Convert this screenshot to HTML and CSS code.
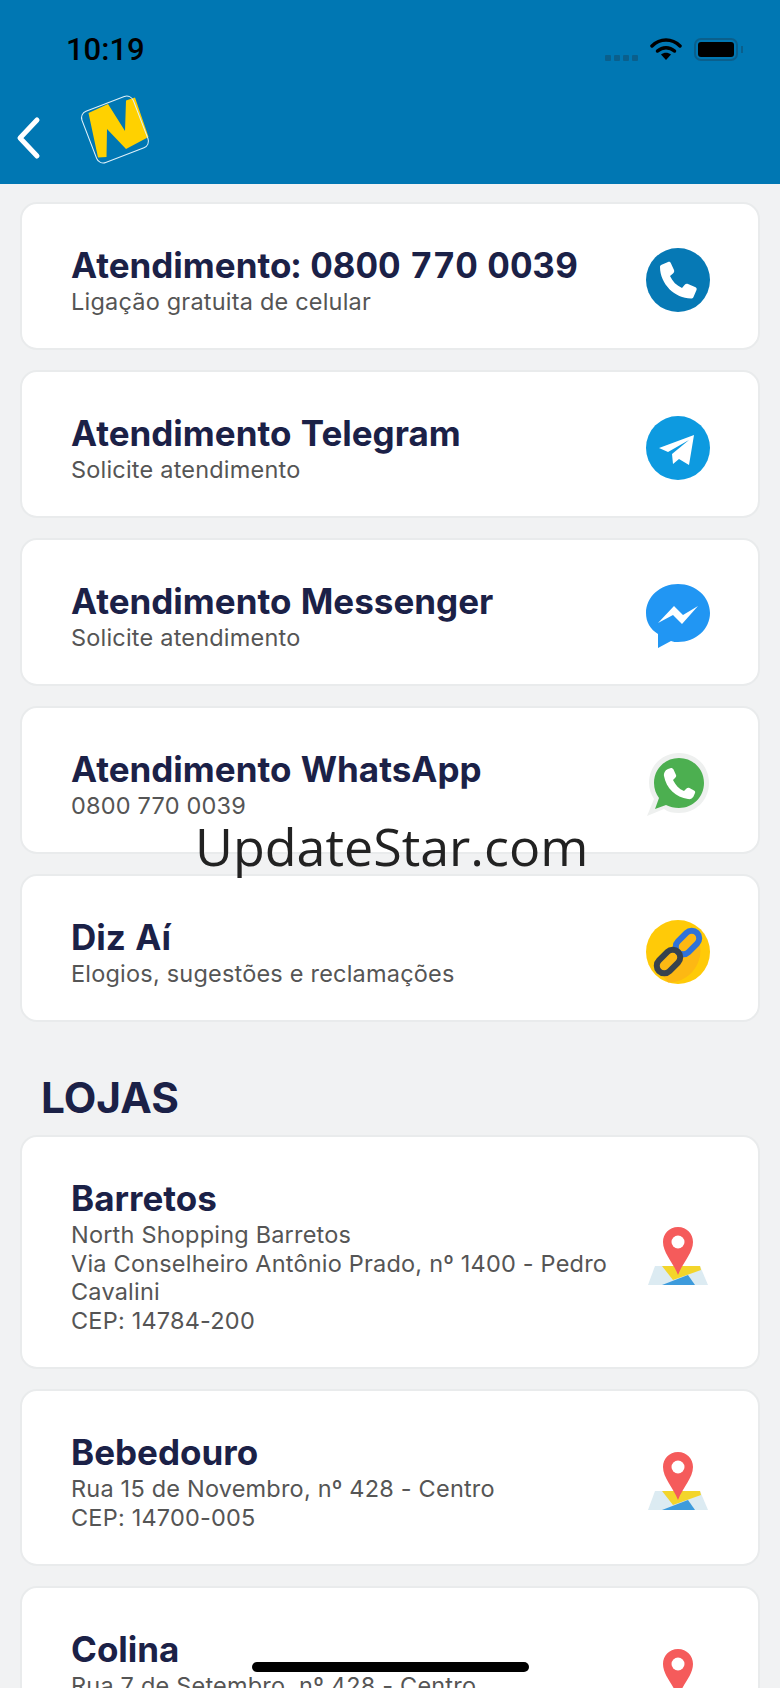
FILE: index.html
```html
<!DOCTYPE html>
<html lang="pt-BR">
<head>
  <meta charset="UTF-8" />
  <meta name="viewport" content="width=device-width, initial-scale=1.0" />
  <title>Atendimento</title>
  <link rel="stylesheet" href="styles.css">
</head>
<body>
  <svg class="sprites" width="0" height="0">
    <symbol id="pin" viewBox="0 0 64 64">
      <path d="M9 42 L54 42 L62 61 L2 61 Z" fill="#dcebf2"/>
      <path d="M16 42 L54 42 L55 46 L27 56 Z" fill="#f3d52b"/>
      <path d="M16 61 L42 51 L49 61 Z" fill="#3d9bdc"/>
      <path d="M32 3 C23 3 17 10 17 18 C17 29 27 38 32 51 C37 38 47 29 47 18 C47 10 41 3 32 3 Z" fill="#f55b5b"/>
      <circle cx="32" cy="18" r="6.500" fill="#fff"/>
    </symbol>
  </svg>

  <header class="topbar">
    <div class="status">
      <span class="clock">10:19</span>
      <div class="status-icons">
        <span class="signal"><i></i><i></i><i></i><i></i></span>
        <svg class="wifi" viewBox="0 0 32 22" width="32" height="22">
          <path d="M2 8 C10 0 22 0 30 8" fill="none" stroke="#000" stroke-width="3.500" stroke-linecap="round"/>
          <path d="M7.500 13 C12.500 8.500 19.500 8.500 24.500 13" fill="none" stroke="#000" stroke-width="3.500" stroke-linecap="round"/>
          <path d="M11 16.500 C14 14 18 14 21 16.500 L16 22 Z" fill="#000"/>
        </svg>
        <span class="battery"><b></b></span>
        <span class="battery-cap"></span>
      </div>
    </div>
    <div class="navrow">
      <svg class="back" viewBox="0 0 26 44" width="26" height="44">
        <path d="M22 4 L5 22 L22 40" fill="none" stroke="#fff" stroke-width="5" stroke-linecap="round" stroke-linejoin="round"/>
      </svg>
      <svg class="logo" viewBox="0 0 90 90" width="90" height="90">
        <path d="M18.500 28 L38 19 L55 46 L56 15.500 L65 12.500 L78.500 52 L56 64 L37 44 L36.500 72 L28 72.500 Z" fill="#ffd100"/>
        <rect x="17.500" y="17" width="55" height="55" rx="7" transform="rotate(-21 45 44.500)" fill="none" stroke="#dff1fa" stroke-width="1"/>
      </svg>
    </div>
  </header>

  <main class="content">
    <section class="card">
      <div class="card-text">
        <h2>Atendimento: 0800 770 0039</h2>
        <p>Ligação gratuita de celular</p>
      </div>
      <svg class="card-icon" viewBox="0 0 64 64">
        <circle cx="32" cy="32" r="32" fill="#0679b5"/>
        <path d="M15 17 L22 14 C23.500 13.500 24.500 14 25 15.500 L28 22 C28.500 23.500 28 24.500 27 25.500 L24 28 C26.500 33.500 30.500 37.500 36 40 L38.500 37 C39.500 36 40.500 35.500 42 36 L49 39 C50.500 39.500 51 40.500 50.500 42 L47.500 49 C47 50 46 50.500 45 50.500 C29 50.500 14 36 14 19 C14 18 14.500 17.500 15 17 Z" fill="#fff"/>
      </svg>
    </section>
    <section class="card">
      <div class="card-text">
        <h2>Atendimento Telegram</h2>
        <p>Solicite atendimento</p>
      </div>
      <svg class="card-icon" viewBox="0 0 64 64">
        <circle cx="32" cy="32" r="32" fill="#0d9ae0"/>
        <path d="M13 32 L48 19 L43 49 L33 43 L27 48 L26 38 L43 24 L22 36 Z" fill="#fff"/>
      </svg>
    </section>
    <section class="card">
      <div class="card-text">
        <h2>Atendimento Messenger</h2>
        <p>Solicite atendimento</p>
      </div>
      <svg class="card-icon" viewBox="0 0 64 64">
        <path d="M32 0 C14 0 0 13 0 29 C0 38 4 45 12 50 L12 64 L25 57 C27 58 30 58 32 58 C50 58 64 45 64 29 C64 13 50 0 32 0 Z" fill="#2196f3"/>
        <path d="M12 39 L28 22 L37 31 L52 22 L36 40 L27 31 Z" fill="#fff"/>
      </svg>
    </section>
    <section class="card">
      <div class="card-text">
        <h2>Atendimento WhatsApp</h2>
        <p>0800 770 0039</p>
      </div>
      <svg class="card-icon" viewBox="0 0 64 64">
        <path d="M33 1 C16 1 3 14 3 31 C3 37 5 42 8 47 L1 64 L18 57 C22 60 27 61 33 61 C50 61 63 48 63 31 C63 14 50 1 33 1 Z" fill="#eef0ef"/>
        <path d="M33 6 C19 6 8 17 8 31 C8 37 10 42 13 46 L9 57 L20 53 C24 55 28 56 33 56 C47 56 58 45 58 31 C58 17 47 6 33 6 Z" fill="#4caf50"/>
        <path d="M22 17 L25 16 C26 16 27 16.500 27.500 17.500 L30 23 C30.500 24 30 25 29 26 L27 28 C29.500 33 33 37 38 39 L40.500 36.500 C41.500 35.500 42.500 35.500 43.500 36 L48 38.500 C49 39 49.500 40 49 41 L47.500 44.500 C46.500 46.500 44 47.500 42 47 C30 45.500 20 36 18 24 C17.500 21 19.500 18 22 17 Z" fill="#fff"/>
      </svg>
    </section>
    <section class="card">
      <div class="card-text">
        <h2>Diz Aí</h2>
        <p>Elogios, sugestões e reclamações</p>
      </div>
      <svg class="card-icon" viewBox="0 0 64 64">
        <circle cx="32" cy="32" r="32" fill="#ffca08"/>
        <path d="M47 10 A32 32 0 0 1 22 62.500 L11 48 L37 12 Z" fill="#fdb813"/>
        <rect x="28" y="15" width="27" height="15" rx="7.500" transform="rotate(-45 41.500 22.500)" fill="none" stroke="#2f72d9" stroke-width="6"/>
        <rect x="9" y="34" width="27" height="15" rx="7.500" transform="rotate(-45 22.500 41.500)" fill="none" stroke="#37424e" stroke-width="6"/>
      </svg>
    </section>

    <h1 class="section-title">LOJAS</h1>

    <section class="card">
      <div class="card-text">
        <h2>Barretos</h2>
        <p>North Shopping Barretos</p>
        <p>Via Conselheiro Antônio Prado, nº 1400 - Pedro Cavalini</p>
        <p>CEP: 14784-200</p>
      </div>
      <svg class="card-icon"><use href="#pin"/></svg>
    </section>
    <section class="card">
      <div class="card-text">
        <h2>Bebedouro</h2>
        <p>Rua 15 de Novembro, nº 428 - Centro</p>
        <p>CEP: 14700-005</p>
      </div>
      <svg class="card-icon"><use href="#pin"/></svg>
    </section>
    <section class="card">
      <div class="card-text">
        <h2>Colina</h2>
        <p>Rua 7 de Setembro, nº 428 - Centro</p>
        <p>CEP: 14770-000</p>
      </div>
      <svg class="card-icon"><use href="#pin"/></svg>
    </section>
  </main>

  <div class="watermark">UpdateStar.com</div>
  <div class="home-bar"></div>
</body>
</html>
```

FILE: styles.css
```css
body {
  font-family: 'Inter', sans-serif;
  background: #f1f2f3;
  margin: 0;
  padding: 0;
  height: 1688px;
  overflow: hidden;
  position: relative;
}
.sprites {
  position: absolute;
}
.topbar {
  background-color: #0077b3;
  height: 184px;
  box-sizing: border-box;
  padding-top: 29px;
}
.status {
  display: flex;
  justify-content: space-between;
  align-items: center;
  height: 40px;
  padding: 0 37px 0 66px;
}
.clock {
  font-family: 'Roboto', sans-serif;
  font-size: 31px;
  font-weight: 500;
  color: #000;
}
.status-icons {
  display: flex;
  align-items: center;
  gap: 12px;
}
.signal {
  display: flex;
  gap: 3px;
  align-self: flex-end;
}
.signal i {
  width: 6px;
  height: 6px;
  background: #0a5f8c;
  border-radius: 1px;
}
.wifi {
  display: block;
}
.battery {
  display: block;
  width: 44px;
  height: 23px;
  box-sizing: border-box;
  border: 2px solid #0a5f8c;
  border-radius: 7px;
  padding: 2px;
}
.battery b {
  display: block;
  height: 100%;
  background: #000;
  border-radius: 3px;
}
.battery-cap {
  width: 2px;
  height: 7px;
  margin-left: -9px;
  background: #0a5f8c;
}
.navrow {
  display: flex;
  align-items: flex-start;
  gap: 29px;
  padding-left: 15px;
  margin-top: 16px;
}
.back {
  display: block;
  margin-top: 31px;
}
.logo {
  display: block;
}
.content {
  padding: 18px 20px 0;
}
.card {
  display: flex;
  justify-content: space-between;
  align-items: center;
  background: #fff;
  border: 2px solid #e9ebec;
  border-radius: 17px;
  padding: 41px 48px 31.300px 49px;
  margin-bottom: 20px;
}
.card-text {
  flex: 1;
  max-width: 540px;
}
.card h2 {
  font-size: 35px;
  font-variant-numeric: tabular-nums;
  line-height: 40px;
  font-weight: 700;
  color: #1b2147;
  margin: 0 0 3px;
}
.card p {
  font-size: 23.500px;
  letter-spacing: 0.200px;
  line-height: 28.700px;
  color: #555;
  margin: 0;
}
.card-icon {
  width: 64px;
  height: 64px;
  flex-shrink: 0;
  display: block;
  margin-top: -2px;
}
.section-title {
  font-size: 42.300px;
  line-height: 48px;
  font-weight: 700;
  color: #1b2147;
  margin: 52px 0 13px 21px;
}
.watermark {
  position: absolute;
  top: 810px;
  left: 195px;
  font-family: 'Open Sans', sans-serif;
  font-size: 52px;
  line-height: 72px;
  color: #222;
}
.home-bar {
  position: absolute;
  left: 252px;
  top: 1662px;
  width: 277px;
  height: 10px;
  background: #000;
  border-radius: 5px;
}
```
